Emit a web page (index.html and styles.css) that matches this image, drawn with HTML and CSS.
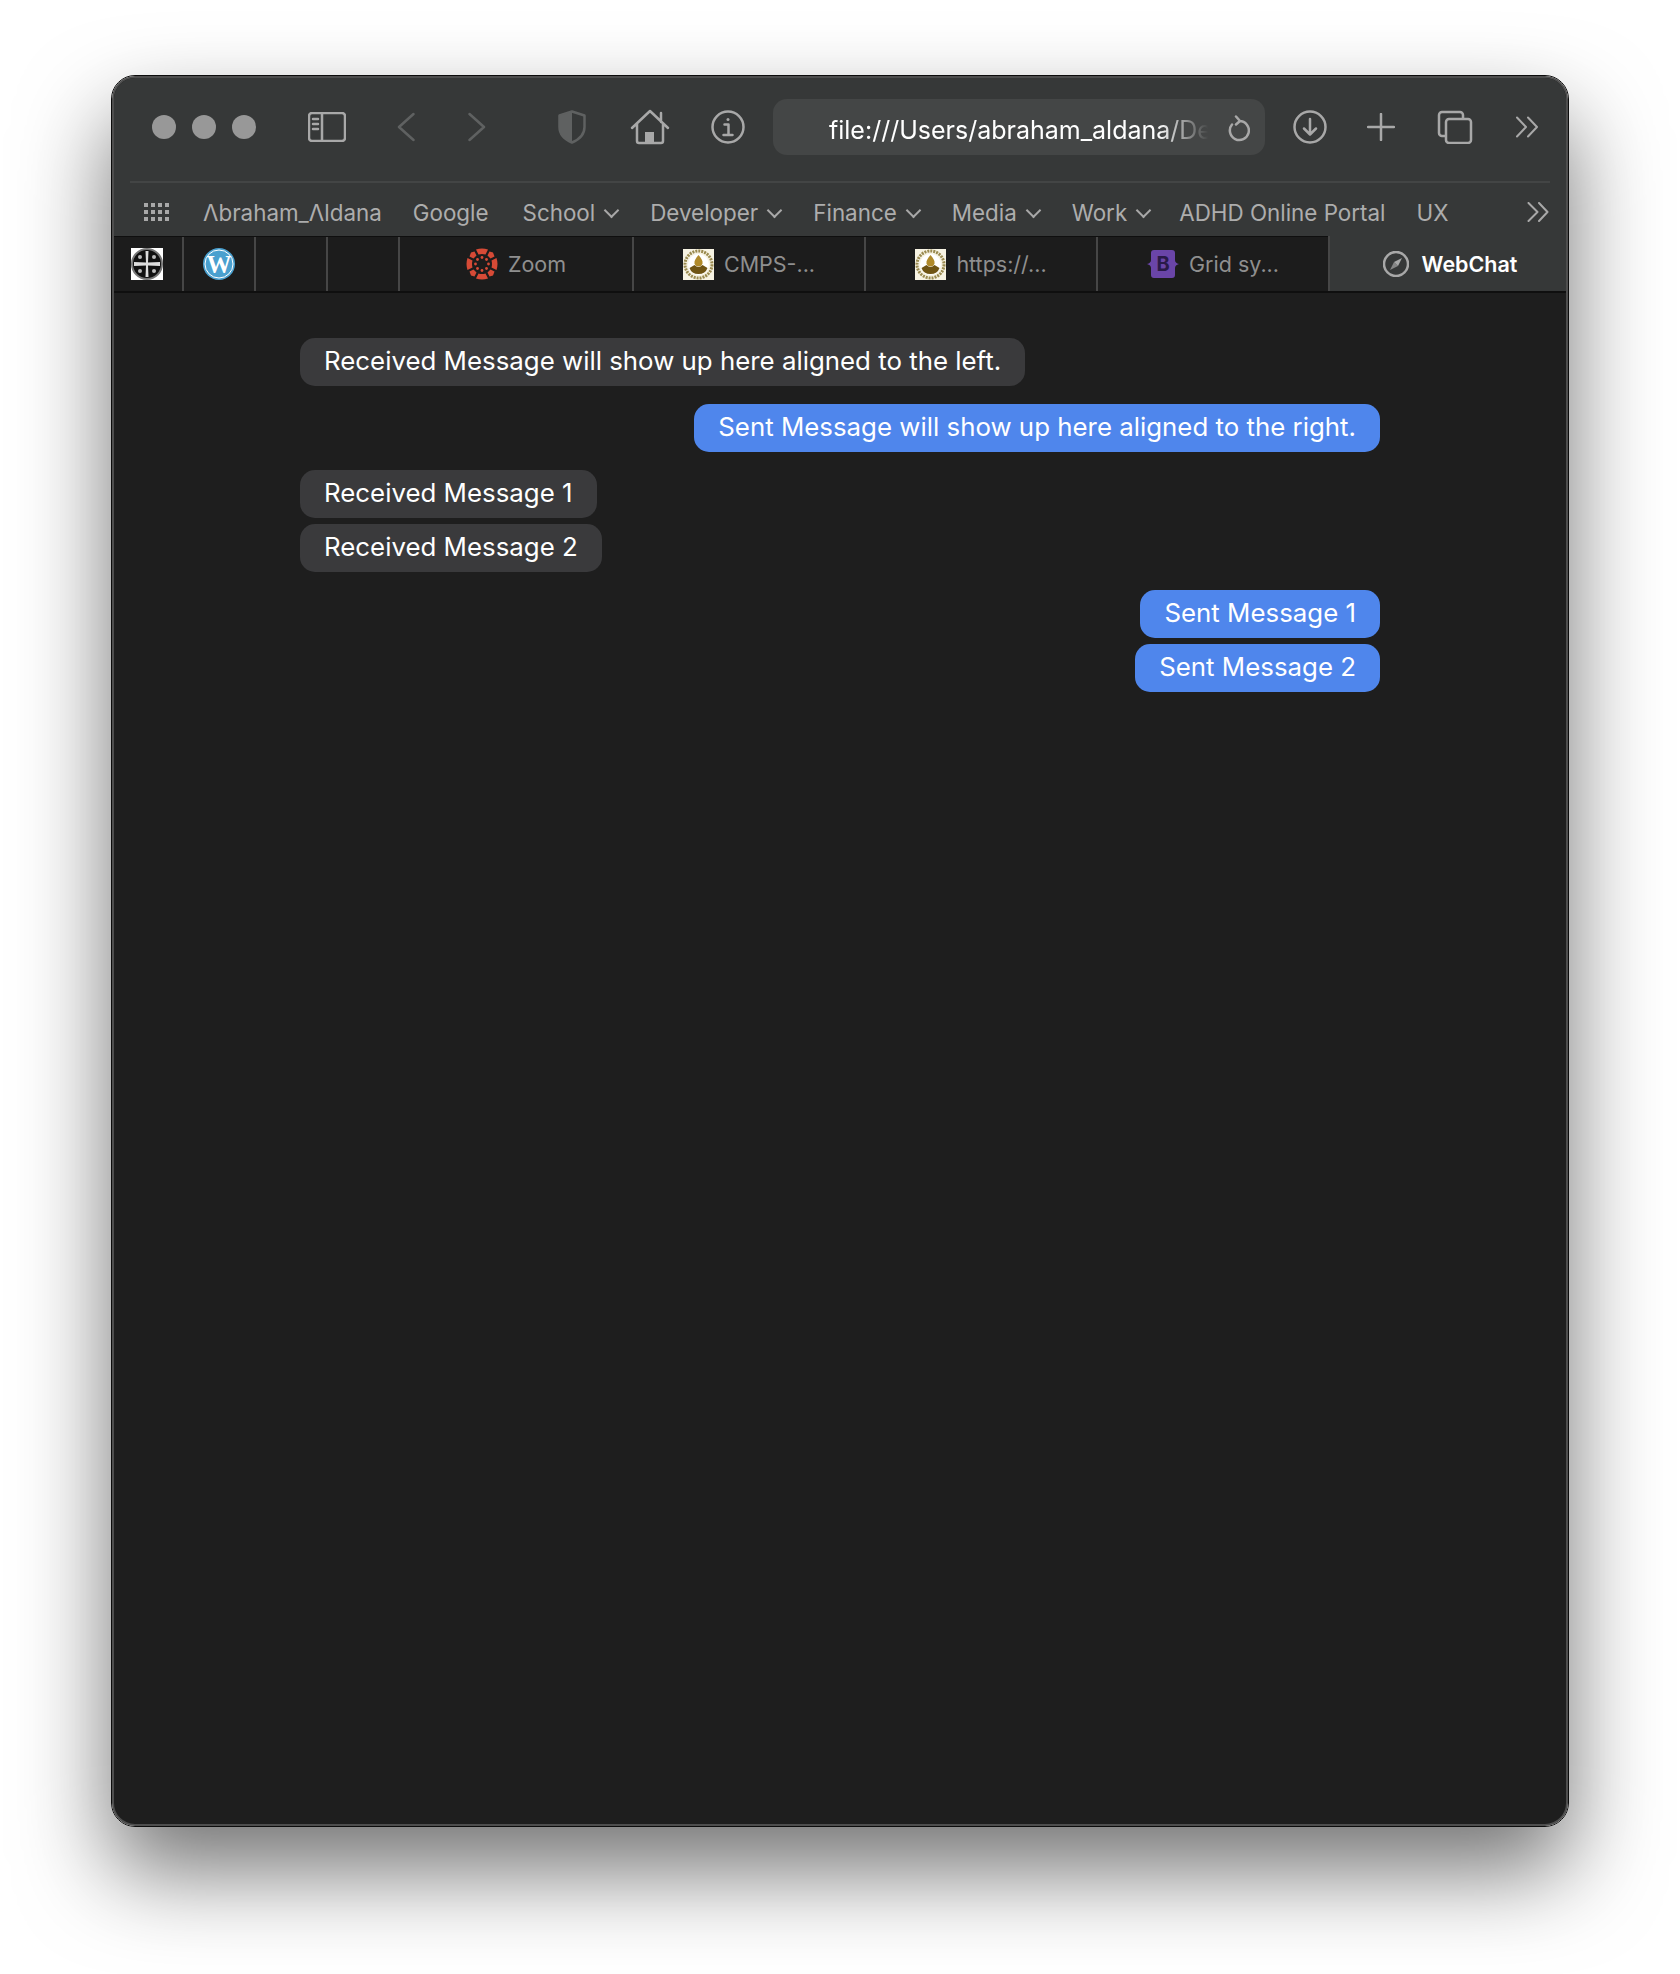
FILE: index.html
```html
<!DOCTYPE html>
<html lang="en">
<head>
    <meta charset="UTF-8">
    <title>WebChat</title>
    <link rel="stylesheet" href="styles.css">
</head>
<body>
    <div class="window">
        <div class="frame">
            <header class="toolbar">
                <div class="lights"><span></span><span></span><span></span></div>
                <svg class="icon i-sidebar" width="38" height="30" viewBox="0 0 38 30"><rect x="1" y="1" width="36" height="28" rx="3"/><path d="M14 1v28M5 7h5M5 12h5M5 17h5"/></svg>
                <svg class="icon dim i-back" width="18" height="30" viewBox="0 0 18 30"><path d="M16.500 2 2 15l14.500 13"/></svg>
                <svg class="icon dim i-forward" width="18" height="30" viewBox="0 0 18 30"><path d="M1.500 2 16 15 1.500 28"/></svg>
                <svg class="icon dim i-shield" width="28" height="34" viewBox="0 0 28 34"><path d="M14 1.500 26.500 5.500V17C26.500 25 20 30 14 32.500 8 30 1.500 25 1.500 17V5.500Z"/><path class="fill" d="M14 1.500V32.500C8 30 1.500 25 1.500 17V5.500Z"/></svg>
                <svg class="icon i-home" width="40" height="36" viewBox="0 0 40 36"><path d="M2 19 20 2l18 17M7 15v17a2 2 0 0 0 2 2h22a2 2 0 0 0 2-2V15M31 4v9"/><path class="fill" d="M15 34V23h9v11Z"/></svg>
                <svg class="icon i-info" width="34" height="34" viewBox="0 0 34 34"><circle cx="17" cy="17" r="15.500"/><path d="M13.500 14.500h4v10M12.500 25h9"/><circle class="fill" cx="17" cy="9.500" r="1.500"/></svg>
                <div class="address">
                    <span class="url">file:///Users/abraham_aldana/De</span>
                    <svg class="icon i-reload" width="22" height="27" viewBox="0 0 22 27"><path d="M11.500 6a9.500 9.500 0 1 1-7.500 3.500M8 1.500l4 4.500-4 3.500"/></svg>
                </div>
                <svg class="icon i-download" width="34" height="34" viewBox="0 0 34 34"><circle cx="17" cy="17" r="15.500"/><path d="M17 9v15M11 18.500l6 6 6-6"/></svg>
                <svg class="icon i-plus" width="28" height="28" viewBox="0 0 28 28"><path d="M14 1v26M1 14h26"/></svg>
                <svg class="icon i-tabs" width="36" height="34" viewBox="0 0 36 34"><path d="M8 26H5a3 3 0 0 1-3-3V5a3 3 0 0 1 3-3h18a3 3 0 0 1 3 3v3"/><rect x="9" y="9" width="25" height="24" rx="3"/></svg>
                <svg class="icon thin i-more" width="24" height="22" viewBox="0 0 24 22"><path d="M2 1.500 11 11l-9 9.500M13 1.500l9 9.500-9 9.500"/></svg>
            </header>

            <nav class="bookmarks">
                <svg class="i-grid" width="25" height="18" viewBox="0 0 25 18">
                    <g class="grid-dots">
                        <rect x="0" width="4" height="4"/><rect x="7" width="4" height="4"/><rect x="14" width="4" height="4"/><rect x="21" width="4" height="4"/>
                        <rect x="0" y="7" width="4" height="4"/><rect x="7" y="7" width="4" height="4"/><rect x="14" y="7" width="4" height="4"/><rect x="21" y="7" width="4" height="4"/>
                        <rect x="0" y="14" width="4" height="4"/><rect x="7" y="14" width="4" height="4"/><rect x="14" y="14" width="4" height="4"/><rect x="21" y="14" width="4" height="4"/>
                    </g>
                </svg>
                <ul class="bookmark-list">
                    <li>Λbraham_Λldana</li>
                    <li class="google">Google</li>
                    <li class="folder">School</li>
                    <li class="folder">Developer</li>
                    <li class="folder">Finance</li>
                    <li class="folder">Media</li>
                    <li class="folder">Work</li>
                    <li class="portal">ADHD Online Portal</li>
                    <li>UX</li>
                </ul>
                <svg class="icon thin i-more2" width="22" height="20" viewBox="0 0 22 20"><path d="M1.500 1 10.500 10l-9 9M12 1l8.500 9-8.500 9"/></svg>
            </nav>

            <div class="tabbar">
                <div class="tab pinned first">
                    <svg class="favicon" width="32" height="32" viewBox="0 0 32 32"><rect width="32" height="32" fill="#fff"/><circle cx="16" cy="16" r="15" fill="#111"/><circle cx="16" cy="16" r="15" fill="none" stroke="#777" stroke-width="2"/><path d="M14.500 3h3l-.500 11.500 12-.500v4l-12-.500.500 11.500h-3l.500-11.500L3 18v-4l12 .500Z" fill="#ddd"/><circle cx="9" cy="9" r="2" fill="#bbb"/><circle cx="23" cy="9" r="2" fill="#bbb"/><circle cx="9" cy="23" r="2" fill="#bbb"/><circle cx="23" cy="23" r="2" fill="#bbb"/></svg>
                </div>
                <div class="tab pinned">
                    <svg class="favicon" width="32" height="32" viewBox="0 0 32 32"><circle cx="16" cy="16" r="16" fill="#4aa0cf"/><circle cx="16" cy="16" r="14" fill="none" stroke="#fff" stroke-width="1"/><text class="wp-letter" x="16" y="24.500" text-anchor="middle">W</text></svg>
                </div>
                <div class="tab pinned"></div>
                <div class="tab pinned"></div>
                <div class="tab wide">
                    <svg class="favicon" width="32" height="32" viewBox="0 0 32 32" fill="#d64a36">
                        <path d="M10 1.500Q16-.500 22 1.500L19.500 6.500Q16 5.500 12.500 6.500Z"/>
                        <path d="M10 30.500Q16 32.500 22 30.500L19.500 25.500Q16 26.500 12.500 25.500Z"/>
                        <path d="M1.500 10Q-.500 16 1.500 22L6.500 19.500Q5.500 16 6.500 12.500Z"/>
                        <path d="M30.500 10Q32.500 16 30.500 22L25.500 19.500Q26.500 16 25.500 12.500Z"/>
                        <path d="M5 4.500 8.500 3.500 10.500 7.500 7.500 10.500 3.500 8.500Z"/>
                        <path d="M27 4.500 23.500 3.500 21.500 7.500 24.500 10.500 28.500 8.500Z"/>
                        <path d="M5 27.500 8.500 28.500 10.500 24.500 7.500 21.500 3.500 23.500Z"/>
                        <path d="M27 27.500 23.500 28.500 21.500 24.500 24.500 21.500 28.500 23.500Z"/>
                        <circle cx="16" cy="9.500" r="1.400"/><circle cx="16" cy="22.500" r="1.400"/><circle cx="9.500" cy="16" r="1.400"/><circle cx="22.500" cy="16" r="1.400"/>
                        <circle cx="11.500" cy="11.500" r="1.400"/><circle cx="20.500" cy="11.500" r="1.400"/><circle cx="11.500" cy="20.500" r="1.400"/><circle cx="20.500" cy="20.500" r="1.400"/>
                    </svg>
                    <span>Zoom</span>
                </div>
                <div class="tab">
                    <svg class="favicon" width="31" height="31" viewBox="0 0 31 31"><rect width="31" height="31" fill="#f7f3e3"/><circle cx="15.500" cy="15.500" r="13.500" fill="none" stroke="#9a8a50" stroke-width="3" stroke-dasharray="2 1"/><circle cx="15.500" cy="15.500" r="10.500" fill="#fff"/><path d="M15.500 6c3 3.500 4.500 6 4 8.500-.500 2-2 3-4 3s-3.500-1-4-3C11 12 12.500 9.500 15.500 6Z" fill="#b08a2a"/><path d="M6.500 19l5-3q4 4 8 0l5 3q-2 6-9 6t-9-6Z" fill="#6f5414"/></svg>
                    <span>CMPS-...</span>
                </div>
                <div class="tab">
                    <svg class="favicon" width="31" height="31" viewBox="0 0 31 31"><rect width="31" height="31" fill="#f7f3e3"/><circle cx="15.500" cy="15.500" r="13.500" fill="none" stroke="#9a8a50" stroke-width="3" stroke-dasharray="2 1"/><circle cx="15.500" cy="15.500" r="10.500" fill="#fff"/><path d="M15.500 6c3 3.500 4.500 6 4 8.500-.500 2-2 3-4 3s-3.500-1-4-3C11 12 12.500 9.500 15.500 6Z" fill="#b08a2a"/><path d="M6.500 19l5-3q4 4 8 0l5 3q-2 6-9 6t-9-6Z" fill="#6f5414"/></svg>
                    <span>https://...</span>
                </div>
                <div class="tab">
                    <svg class="favicon" width="32" height="32" viewBox="0 0 32 32"><path d="M7 2h18a3 3 0 0 1 3 3v7q0 3 4 4-4 1-4 4v7a3 3 0 0 1-3 3H7a3 3 0 0 1-3-3v-7q0-3-4-4 4-1 4-4V5a3 3 0 0 1 3-3Z" fill="#6a45a8"/><text class="b-letter" x="16" y="23" text-anchor="middle">B</text></svg>
                    <span>Grid sy...</span>
                </div>
                <div class="tab active">
                    <svg class="icon i-compass" width="26" height="26" viewBox="0 0 26 26"><circle cx="13" cy="13" r="12"/><path class="fill" d="M19 7 15 15 11 11Z"/><path class="fill half" d="M7 19 11 11 15 15Z"/></svg>
                    <span>WebChat</span>
                </div>
            </div>

            <main class="chat">
                <div class="msg-group">
                    <div class="msg received">Received Message will show up here aligned to the left.</div>
                </div>
                <div class="msg-group">
                    <div class="msg sent">Sent Message will show up here aligned to the right.</div>
                </div>
                <div class="msg-group">
                    <div class="msg received">Received Message 1</div>
                    <div class="msg received">Received Message 2</div>
                </div>
                <div class="msg-group">
                    <div class="msg sent">Sent Message 1</div>
                    <div class="msg sent">Sent Message 2</div>
                </div>
            </main>
        </div>
    </div>
</body>
</html>
```

FILE: styles.css
```css
:root {
    --chrome: #363838;
    --dark: #1e1e1e;
    --tab-dark: #1c1c1c;
    --icon: #a8a8a8;
    --icon-dim: #5f6161;
    --text-dim: #adadad;
    --bubble: #3a3a3c;
    --blue: #4f86ec;
}

* {
    margin: 0;
    padding: 0;
    box-sizing: border-box;
}

html, body {
    height: 100%;
}

body {
    background-color: #fff;
    font-family: Inter, "Noto Sans", "Liberation Sans", sans-serif;
    overflow: hidden;
    padding: 75px 0 0 111px;
}

.window {
    width: 1458px;
    height: 1752px;
    border: 1px solid #0c0c0c;
    border-radius: 24px;
    box-shadow: 0 44px 90px rgba(0,0,0,0.55);
}

.frame {
    height: 100%;
    display: flex;
    flex-direction: column;
    border: 2px solid #4e4e4e;
    border-radius: 23px;
    overflow: hidden;
    background-color: var(--dark);
}

/* icons */
.icon {
    flex: none;
    fill: none;
    stroke: var(--icon);
    stroke-width: 2.500;
    stroke-linecap: round;
    stroke-linejoin: round;
}

.icon .fill {
    fill: var(--icon);
    stroke: none;
}

.icon.dim {
    stroke: var(--icon-dim);
}

.icon.dim .fill {
    fill: var(--icon-dim);
}

.icon.thin {
    stroke-width: 2;
}

/* toolbar */
.toolbar {
    height: 103px;
    flex: none;
    display: flex;
    align-items: center;
    padding: 0 0 5px 38px;
    background-color: var(--chrome);
}

.lights {
    display: flex;
    gap: 16px;
}

.lights span {
    width: 24px;
    height: 24px;
    border-radius: 50%;
    background-color: #989898;
}

.i-sidebar { margin-left: 52px; }
.i-back { margin-left: 51px; }
.i-forward { margin-left: 53px; }
.i-shield { margin-left: 72px; }
.i-home { margin-left: 44px; }
.i-info { margin-left: 41px; }
.i-download { margin-left: 28px; }
.i-plus { margin-left: 40px; }
.i-tabs { margin-left: 42px; }
.i-more { margin-left: 42px; }

.address {
    width: 492px;
    height: 56px;
    margin: 0 0 0 28px;
    display: flex;
    align-items: center;
    border-radius: 14px;
    background-color: #444646;
    flex: none;
    padding: 0 15px 0 56px;
}

.url {
    flex: 1;
    padding-top: 5px;
    white-space: nowrap;
    color: #fff;
    font-size: 25px;
    -webkit-mask-image: linear-gradient(to right, #000 84%, transparent 97%);
    mask-image: linear-gradient(to right, #000 84%, transparent 97%);
}

.i-reload {
    margin-left: 8px;
    margin-top: 2px;
}

/* bookmarks */
.bookmarks {
    flex: none;
    height: 55px;
    display: flex;
    align-items: center;
    padding: 7px 0 0 30px;
    background-color: var(--chrome);
    position: relative;
}

.bookmarks::before {
    content: "";
    position: absolute;
    left: 16px;
    right: 16px;
    top: 0;
    height: 2px;
    background-color: #434545;
}

.grid-dots {
    fill: var(--icon);
}

.bookmark-list {
    list-style: none;
    display: flex;
    flex: 1;
    margin-left: 34px;
    gap: 31px;
    color: var(--text-dim);
    font-size: 22.400px;
}

.bookmark-list li {
    white-space: nowrap;
}

.bookmark-list .google {
    margin-right: 3px;
}

.bookmark-list .portal {
    margin-left: -3px;
}

.folder {
    display: flex;
    align-items: center;
}

.folder::after {
    content: "";
    width: 9px;
    height: 9px;
    margin: -4px 2px 0 11px;
    border-right: 2.500px solid var(--icon);
    border-bottom: 2.500px solid var(--icon);
    transform: rotate(45deg);
}

.i-more2 {
    margin-right: 17px;
}

/* tabs */
.tabbar {
    flex: none;
    height: 57px;
    display: flex;
    border-top: 1px solid #0f0f0f;
    border-bottom: 2px solid #0f0f0f;
    background-color: var(--tab-dark);
}

.tab {
    width: 232px;
    display: flex;
    align-items: center;
    justify-content: center;
    gap: 10px;
    border-left: 2px solid #464646;
    color: #8f8f8f;
    font-size: 21.500px;
    white-space: nowrap;
}

.tab.wide {
    width: 234px;
}

.tab.pinned {
    width: 72px;
}

.tab.first {
    width: 68px;
    padding-right: 2px;
    border-left: none;
}

.tab.active {
    flex: 1;
    gap: 13px;
    margin-top: -1px;
    padding-left: 4px;
    background-color: var(--chrome);
    color: #fff;
    font-weight: 600;
}

.favicon {
    flex: none;
}

.wp-letter {
    font-family: "Liberation Serif", serif;
    font-weight: 700;
    font-size: 25px;
    fill: #fff;
}

.b-letter {
    font-family: Inter, sans-serif;
    font-weight: 700;
    font-size: 20px;
    fill: #2a1a48;
}

.i-compass .half {
    opacity: 0.7;
}

/* messages */
.chat {
    flex: 1;
    width: 1080px;
    margin: 0 auto;
    padding-top: 45px;
    display: flex;
    flex-direction: column;
    gap: 18px;
}

.msg-group {
    display: flex;
    flex-direction: column;
    gap: 6px;
}

.msg {
    width: fit-content;
    height: 48px;
    line-height: 46px;
    padding: 0 24px;
    border-radius: 15px;
    font-size: 25.850px;
    color: #fff;
    white-space: nowrap;
}

.received {
    background-color: var(--bubble);
}

.sent {
    align-self: flex-end;
    background-color: var(--blue);
}
```
